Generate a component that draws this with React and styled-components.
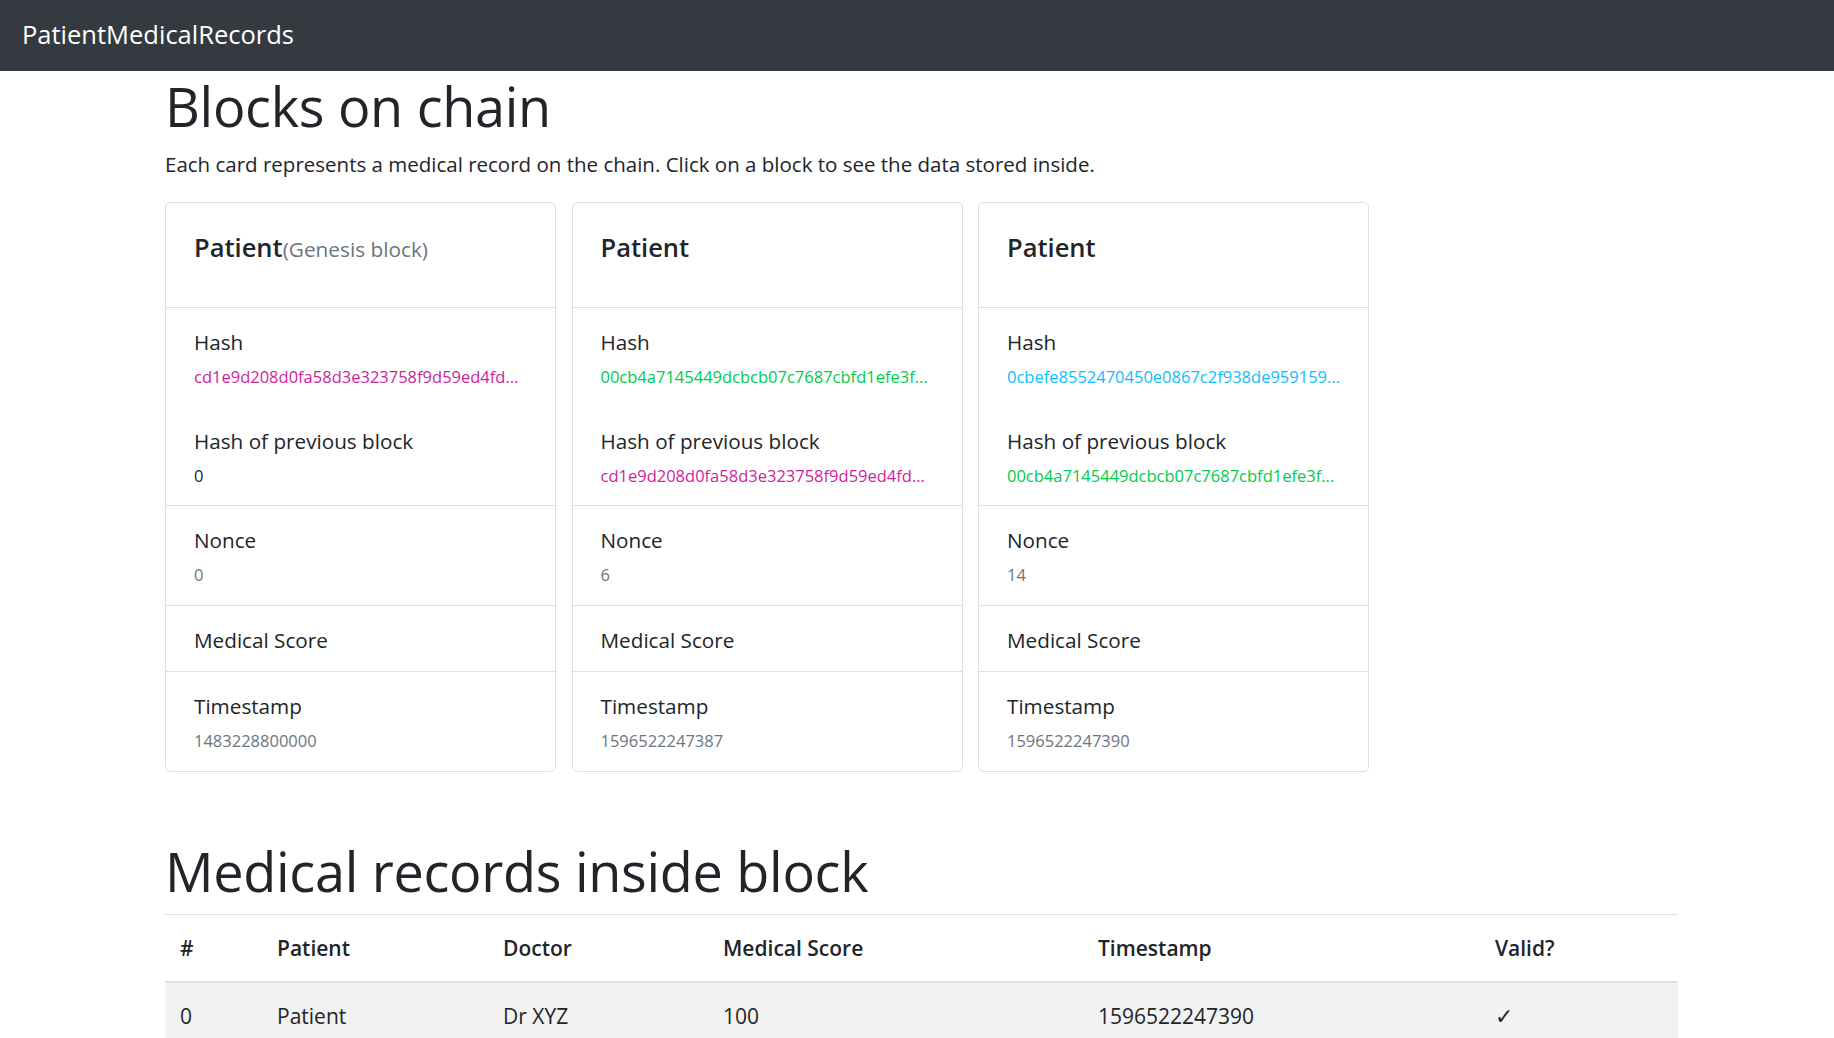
import React from "react";
import styled, { createGlobalStyle } from "styled-components";

const GlobalStyle = createGlobalStyle`
  body {
    margin: 0;
    background: #fff;
    color: #212529;
    font-family: "Open Sans", "Noto Sans", sans-serif;
  }
  * {
    box-sizing: border-box;
  }
`;

const blocks = [
  {
    genesis: true,
    hash: "cd1e9d208d0fa58d3e323758f9d59ed4fd...",
    prevHash: "0",
    nonce: "0",
    timestamp: "1483228800000",
  },
  {
    hash: "00cb4a7145449dcbcb07c7687cbfd1efe3f...",
    prevHash: "cd1e9d208d0fa58d3e323758f9d59ed4fd...",
    nonce: "6",
    timestamp: "1596522247387",
  },
  {
    hash: "0cbefe8552470450e0867c2f938de959159...",
    prevHash: "00cb4a7145449dcbcb07c7687cbfd1efe3f...",
    nonce: "14",
    timestamp: "1596522247390",
  },
];

const records = [
  { id: 0, patient: "Patient", doctor: "Dr XYZ", score: 100, timestamp: "1596522247390", valid: true },
];

// hash colour is taken from its first six hex digits
const hashColor = (h) => (h.length >= 6 ? `#${h.slice(0, 6)}` : "#212529");

const Navbar = styled.nav`
  height: 71px;
  background-color: #343a40;
  display: flex;
  align-items: center;
  padding: 0 22px;
`;

const Brand = styled.a`
  color: #fff;
  font-size: 25.5px;
  line-height: 1.5;
  text-decoration: none;
  margin-top: -2px;
`;

const Main = styled.main`
  padding: 0 156px 0 165px;
`;

const Title = styled.h1`
  font-size: 54px;
  font-weight: 500;
  line-height: 67px;
  margin: 2px 0 10px;
  letter-spacing: -0.3px;
`;

const Lead = styled.p`
  font-size: 20.5px;
  line-height: 28px;
  margin: 0 0 24px;
`;

const Deck = styled.div`
  display: flex;
  align-items: flex-start;
  gap: 15.5px;
`;

const Card = styled.div`
  width: 391px;
  border: 1px solid rgba(0, 0, 0, 0.125);
  border-radius: 5px;
  display: flex;
  flex-direction: column;
  cursor: pointer;
`;

const CardHeader = styled.div`
  padding: 27px 28px 43px;
  border-bottom: 1px solid rgba(0, 0, 0, 0.125);
`;

const CardTitle = styled.h4`
  margin: 0;
  height: 34px;
  font-size: 25.5px;
  font-weight: 600;
  line-height: 34px;
`;

const Muted = styled.small`
  font-size: 20.8px;
  font-weight: 400;
  line-height: 1;
  color: #6c757d;
`;

const Section = styled.div`
  padding: 21px 28px 17.5px;
  border-top: ${(p) => (p.$first ? "none" : "1px solid rgba(0, 0, 0, 0.125)")};
  display: flex;
  flex-direction: column;
`;

const Field = styled.div`
  display: flex;
  flex-direction: column;
  gap: 9px;
  & + & {
    margin-top: 38.5px;
  }
`;

const Label = styled.h5`
  margin: 0;
  font-size: 20.7px;
  font-weight: 400;
  line-height: 27px;
  color: #212529;
`;

const Value = styled.span`
  font-size: 16.5px;
  line-height: 24px;
  color: ${(p) => p.$color || "#6c757d"};
`;

const SectionTitle = styled.h2`
  font-size: 54px;
  font-weight: 500;
  line-height: 70px;
  margin: 64px 0 8px;
  letter-spacing: -0.3px;
`;

const Table = styled.table`
  width: 100%;
  border-collapse: collapse;
  font-size: 21px;
  line-height: 31px;
`;

const Th = styled.th`
  text-align: left;
  font-weight: 600;
  padding: 18px 15px 17px;
  border-top: 1px solid #dee2e6;
  border-bottom: 2px solid #dee2e6;
`;

const Row = styled.tr`
  background-color: ${(p) => (p.$striped ? "rgba(0, 0, 0, 0.05)" : "transparent")};
`;

const Td = styled.td`
  padding: 18px 15px 17px;
  font-weight: 400;
`;

const Check = styled.span`
  font-family: "DejaVu Sans", sans-serif;
  font-size: 22px;
  font-weight: 300;
`;

const columns = [
  { key: "#", width: 97 },
  { key: "Patient", width: 226 },
  { key: "Doctor", width: 220 },
  { key: "Medical Score", width: 375 },
  { key: "Timestamp", width: 397 },
  { key: "Valid?", width: 198 },
];

const BlockCard = ({ block }) => (
  <Card>
    <CardHeader>
      <CardTitle>
        Patient{block.genesis && <Muted>(Genesis block)</Muted>}
      </CardTitle>
    </CardHeader>
    <Section $first>
      <Field>
        <Label>Hash</Label>
        <Value $color={hashColor(block.hash)}>{block.hash}</Value>
      </Field>
      <Field>
        <Label>Hash of previous block</Label>
        <Value $color={hashColor(block.prevHash)}>{block.prevHash}</Value>
      </Field>
    </Section>
    <Section>
      <Field>
        <Label>Nonce</Label>
        <Value>{block.nonce}</Value>
      </Field>
    </Section>
    <Section>
      <Field>
        <Label>Medical Score</Label>
      </Field>
    </Section>
    <Section>
      <Field>
        <Label>Timestamp</Label>
        <Value>{block.timestamp}</Value>
      </Field>
    </Section>
  </Card>
);

export default function App() {
  return (
    <>
      <GlobalStyle />
      <Navbar>
        <Brand href="#">PatientMedicalRecords</Brand>
      </Navbar>
      <Main>
        <Title>Blocks on chain</Title>
        <Lead>
          Each card represents a medical record on the chain. Click on a block to see the data stored inside.
        </Lead>
        <Deck>
          {blocks.map((b, i) => (
            <BlockCard key={i} block={b} />
          ))}
        </Deck>
        <SectionTitle>Medical records inside block</SectionTitle>
        <Table>
          <colgroup>
            {columns.map((c) => (
              <col key={c.key} style={{ width: c.width }} />
            ))}
          </colgroup>
          <thead>
            <tr>
              {columns.map((c) => (
                <Th key={c.key}>{c.key}</Th>
              ))}
            </tr>
          </thead>
          <tbody>
            {records.map((r, i) => (
              <Row key={r.id} $striped={i % 2 === 0}>
                <Td>{r.id}</Td>
                <Td>{r.patient}</Td>
                <Td>{r.doctor}</Td>
                <Td>{r.score}</Td>
                <Td>{r.timestamp}</Td>
                <Td>{r.valid && <Check>✓</Check>}</Td>
              </Row>
            ))}
          </tbody>
        </Table>
      </Main>
    </>
  );
}
